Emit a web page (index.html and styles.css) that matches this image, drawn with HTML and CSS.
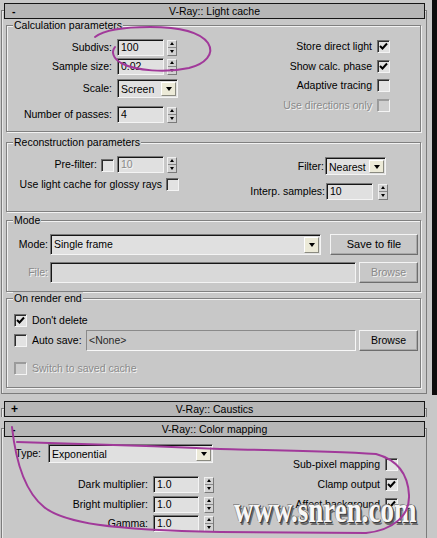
FILE: index.html
```html
<!DOCTYPE html>
<html lang="en">
<head>
<meta charset="utf-8">
<title>V-Ray:: Light cache</title>
<link rel="stylesheet" href="styles.css">
</head>
<body>
<div class="page">
  <div class="main">
    <section class="rollout lc">
      <div class="rhead"><span class="sign">-</span><span class="rtitle">V-Ray:: Light cache</span><span></span></div>

      <div class="group g-calc">
        <div class="gtitle">Calculation parameters</div>
        <div class="gcols">
          <div class="calc-left">
            <div class="row h17"><span class="lbl w105">Subdivs:</span><span class="field sunk f47">100</span><span class="spin"><i class="up"></i><i class="dn"></i></span></div>
            <div class="row h17 mt2"><span class="lbl w105">Sample size:</span><span class="field sunk f47">0.02</span><span class="spin"><i class="up"></i><i class="dn"></i></span></div>
            <div class="row h19 mt4"><span class="lbl w105">Scale:</span><span class="combo sunk c61"><span class="ctext">Screen</span><span class="cbtn"></span></span></div>
            <div class="row h17 mt8"><span class="lbl w105">Number of passes:</span><span class="field sunk f47">4</span><span class="spin"><i class="up"></i><i class="dn"></i></span></div>
          </div>
          <div class="checks calc-right">
            <div class="chk-row"><span>Store direct light</span><span class="cb"><svg viewBox="0 0 11 11"><polyline points="2,5 4.5,7.5 9,2.5"/></svg></span></div>
            <div class="chk-row"><span>Show calc. phase</span><span class="cb"><svg viewBox="0 0 11 11"><polyline points="2,5 4.5,7.5 9,2.5"/></svg></span></div>
            <div class="chk-row"><span>Adaptive tracing</span><span class="cb"></span></div>
            <div class="chk-row dis"><span>Use directions only</span><span class="cb off"></span></div>
          </div>
        </div>
      </div>

      <div class="group g-recon">
        <div class="gtitle">Reconstruction parameters</div>
        <div class="gcols">
          <div class="recon-left">
            <div class="row h17"><span class="lbl w90">Pre-filter:</span><span class="cb ml4"></span><span class="field sunk f47 ml3 distext">10</span><span class="spin"><i class="up"></i><i class="dn"></i></span></div>
            <div class="row h14 mt4"><span class="lbl w155">Use light cache for glossy rays</span><span class="cb ml4"></span></div>
          </div>
          <div class="recon-right">
            <div class="row h18"><span class="lbl w104">Filter:</span><span class="combo sunk c61 ml1"><span class="ctext">Nearest</span><span class="cbtn"></span></span></div>
            <div class="row h17 mt8"><span class="lbl w105">Interp. samples:</span><span class="field sunk f47 ml1">10</span><span class="spin ml5"><i class="up"></i><i class="dn"></i></span></div>
          </div>
        </div>
      </div>

      <div class="group g-mode">
        <div class="gtitle">Mode</div>
        <div class="mode-rows">
          <div class="row h21"><span class="lbl w41">Mode:</span><span class="combo sunk c271 ml2"><span class="ctext">Single frame</span><span class="cbtn"></span></span><span class="btn w88 ml9">Save to file</span></div>
          <div class="row h21 mt7"><span class="lbl w41 distext">File:</span><span class="field sunk wide306 ml2 tall"></span><span class="btn w59 ml3 distext">Browse</span></div>
        </div>
      </div>

      <div class="group g-ore">
        <div class="gtitle">On render end</div>
        <div class="ore-rows">
          <div class="row h14"><span class="cb"><svg viewBox="0 0 11 11"><polyline points="2,5 4.5,7.5 9,2.5"/></svg></span><span class="ctl">Don't delete</span></div>
          <div class="row h21 mt3"><span class="cb"></span><span class="ctl w54">Auto save:</span><span class="static w270">&lt;None&gt;</span><span class="btn w59 ml3">Browse</span></div>
          <div class="row h14 mt10 dis"><span class="cb off"></span><span class="ctl">Switch to saved cache</span></div>
        </div>
      </div>
    </section>

    <section class="rollout collapsed caus">
      <div class="rhead"><span class="sign plus">+</span><span class="rtitle">V-Ray:: Caustics</span><span></span></div>
    </section>

    <section class="rollout cm">
      <div class="rhead"><span class="sign">-</span><span class="rtitle">V-Ray:: Color mapping</span><span></span></div>
      <div class="cm-body">
        <div class="cm-left">
          <div class="row h19 mt7"><span class="lbl w39">Type:</span><span class="combo sunk c165 ml7"><span class="ctext">Exponential</span><span class="cbtn"></span></span></div>
          <div class="row h17 mt13"><span class="lbl w146">Dark multiplier:</span><span class="field sunk f46 ml5">1.0</span><span class="spin ml5"><i class="up"></i><i class="dn"></i></span></div>
          <div class="row h17 mt3"><span class="lbl w146">Bright multiplier:</span><span class="field sunk f46 ml5">1.0</span><span class="spin ml5"><i class="up"></i><i class="dn"></i></span></div>
          <div class="row h17 mt2"><span class="lbl w146">Gamma:</span><span class="field sunk f46 ml5">1.0</span><span class="spin ml5"><i class="up"></i><i class="dn"></i></span></div>
        </div>
        <div class="checks cm-right">
          <div class="chk-row"><span>Sub-pixel mapping</span><span class="cb"></span></div>
          <div class="chk-row"><span>Clamp output</span><span class="cb"><svg viewBox="0 0 11 11"><polyline points="2,5 4.5,7.5 9,2.5"/></svg></span></div>
          <div class="chk-row"><span>Affect background</span><span class="cb"><svg viewBox="0 0 11 11"><polyline points="2,5 4.5,7.5 9,2.5"/></svg></span></div>
        </div>
      </div>
    </section>
  </div>
  <div class="scrollbar"></div>
</div>

<div class="watermark">www.snren.com</div>

<svg class="marks" viewBox="0 0 437 538" width="437" height="538">
  <path d="M95 37 C104 30 124 27 150 27 C180 27 200 32 208 43 C215 54 205 64 189 68 C166 73 136 71 121 63 C113 58 111 52 115 47"/>
  <path d="M12 427 C15 455 23 490 44 507 C64 523 110 530 220 532 L366 533 C394 530 410 515 409 495 C408 475 398 460 376 454 C330 451 260 450 220 449 C150 446 60 443 17 442"/>
</svg>
</body>
</html>
```

FILE: styles.css
```css
* { box-sizing: border-box; }
html, body { margin: 0; padding: 0; }
body {
  width: 437px;
  height: 538px;
  overflow: hidden;
  position: relative;
  background: #c8c8c8;
  color: #000;
  font-family: "Liberation Sans", Arial, sans-serif;
  font-size: 10.5px;
  line-height: 13px;
}

.page { display: flex; width: 437px; height: 538px; overflow: hidden; }
.main { width: 432px; flex: none; }
.scrollbar { width: 5px; height: 395px; background: #0d0d0d; }

/* rollouts */
.rollout {
  width: 426px;
  margin-left: 1px;
  border: 1px solid #7c7c7c;
  box-shadow: inset 1px 1px 0 #e8e8e8;
}
.lc { margin-top: 10px; padding-bottom: 5px; }
.caus { margin-top: 14px; border-bottom: none; }
.cm { margin-top: 11px; height: 110px; border-bottom: none; }

.rhead {
  height: 16px;
  margin: -8px 1px 0 2px;
  border: 1px solid #151515;
  background: #b6b6b6;
  display: grid;
  grid-template-columns: 40px 1fr 40px;
  align-items: center;
  line-height: 14px;
}
.sign { padding-left: 7px; font-weight: bold; }
.sign.plus { padding-left: 6px; font-size: 12px; }
.rtitle { text-align: center; }

/* group boxes */
.group {
  width: 415px;
  margin-left: 4px;
  border: 1px solid #808080;
  box-shadow: inset 1px 1px 0 #f2f2f2, 1px 1px 0 #f2f2f2;
}
.gtitle {
  width: max-content;
  height: 13px;
  margin: -7px 0 0 6px;
  padding: 0 1px;
  background: #c8c8c8;
}
.g-calc { margin-top: 6px; height: 107px; }
.g-recon { margin-top: 10px; height: 70px; }
.g-mode { margin-top: 8px; height: 72px; }
.g-ore { margin-top: 6px; height: 90px; }

.gcols { display: flex; }

.row { display: flex; align-items: center; }
.h14 { height: 14px; }
.h17 { height: 17px; }
.h18 { height: 18px; }
.h19 { height: 19px; }
.h21 { height: 21px; }
.mt2 { margin-top: 2px; }
.mt3 { margin-top: 3px; }
.mt4 { margin-top: 4px; }
.mt7 { margin-top: 7px; }
.mt8 { margin-top: 8px; }
.mt10 { margin-top: 10px; }
.mt13 { margin-top: 13px; }
.ml1 { margin-left: 1px; }
.ml2 { margin-left: 2px; }
.ml3 { margin-left: 3px; }
.ml4 { margin-left: 4px; }
.ml5 { margin-left: 5px; }
.ml7 { margin-left: 7px; }
.ml9 { margin-left: 9px; }

.lbl { text-align: right; flex: none; white-space: nowrap; }
.w39 { width: 39px; }
.w41 { width: 41px; }
.w54 { width: 54px; }
.w88 { width: 88px; }
.w59 { width: 59px; }
.w90 { width: 90px; }
.w104 { width: 104px; }
.w105 { width: 105px; }
.w146 { width: 146px; }
.w155 { width: 155px; }
.w270 { width: 270px; }

/* sunken edit fields */
.sunk {
  border: 1px solid;
  border-color: #7a7a7a #f4f4f4 #f4f4f4 #7a7a7a;
  box-shadow: inset 1px 1px 0 #161616;
  background: #e0e0e0;
}
.field {
  flex: none;
  height: 17px;
  padding: 0 0 0 3px;
  line-height: 15px;
  white-space: nowrap;
}
.f47 { width: 47px; margin-left: 5px; }
.f46 { width: 46px; }
.recon-left .f47 { margin-left: 3px; }
.recon-right .f47 { margin-left: 1px; }
.wide306 { width: 306px; }
.field.tall { height: 21px; background: #d9d9d9; }

.spin {
  flex: none;
  width: 10px;
  height: 16px;
  margin-left: 3px;
  display: flex;
  flex-direction: column;
  border: 1px solid;
  border-color: #f0f0f0 #7a7a7a #7a7a7a #f0f0f0;
  background: #d2d2d2;
}
.spin.ml5 { margin-left: 5px; }
.spin i { flex: 1; display: flex; align-items: center; justify-content: center; }
.spin .up { border-bottom: 1px solid #8a8a8a; }
.spin i::before {
  content: "";
  border-left: 2px solid transparent;
  border-right: 2px solid transparent;
}
.spin .up::before { border-bottom: 3px solid #000; }
.spin .dn::before { border-top: 3px solid #000; }

/* combo boxes */
.combo {
  flex: none;
  display: flex;
  align-items: stretch;
  height: 100%;
  padding: 2px 1px 1px 3px;
}
.c61 { width: 61px; margin-left: 5px; }
.recon-right .c61 { margin-left: 1px; }
.c165 { width: 165px; }
.c271 { width: 271px; }
.ctext { flex: 1; line-height: 14px; white-space: nowrap; overflow: hidden; }
.cbtn {
  flex: none;
  width: 15px;
  border: 1px solid;
  border-color: #ffffff #8a8a80 #8a8a80 #ffffff;
  background: #ecead8;
  display: flex;
  align-items: center;
  justify-content: center;
}
.cbtn::before {
  content: "";
  border-left: 3.5px solid transparent;
  border-right: 3.5px solid transparent;
  border-top: 4px solid #000;
}

/* buttons */
.btn {
  flex: none;
  height: 100%;
  border: 1px solid;
  border-color: #f4f4f4 #6e6e6e #6e6e6e #f4f4f4;
  box-shadow: inset -1px -1px 0 #a8a8a8;
  background: #c8c8c8;
  display: flex;
  align-items: center;
  justify-content: center;
}
.btn.w88 { font-size: 11px; }

.static {
  flex: none;
  height: 100%;
  border: 1px solid;
  border-color: #8a8a8a #f8f8f8 #f8f8f8 #8a8a8a;
  padding-left: 2px;
  display: flex;
  align-items: center;
  color: #2a2a2a;
}

/* checkboxes */
.cb {
  flex: none;
  width: 13px;
  height: 13px;
  border: 1px solid;
  border-color: #6e6e6e #f4f4f4 #f4f4f4 #6e6e6e;
  box-shadow: inset 1px 1px 0 #2c2c2c;
  background: #e2e2e2;
  display: flex;
  align-items: center;
  justify-content: center;
}
.cb svg { width: 11px; height: 11px; display: block; }
.cb polyline { fill: none; stroke: #000; stroke-width: 2; }
.cb.off { background: #cfcfcf; box-shadow: inset 1px 1px 0 #9c9c9c; border-color: #9a9a9a #f4f4f4 #f4f4f4 #9a9a9a; }

.checks { flex: 1; display: flex; flex-direction: column; align-items: flex-end; }
.chk-row { display: flex; align-items: center; gap: 5px; height: 13px; white-space: nowrap; }

.dis, .distext { color: #8a8a8a; text-shadow: 1px 1px 0 #f4f4f4; }

/* calc group */
.calc-left { width: 212px; flex: none; padding-top: 7px; }
.calc-right { padding-top: 8px; padding-right: 30px; gap: 6.7px; }

/* recon group */
.recon-left { width: 213px; flex: none; padding-top: 7px; }
.recon-right { padding-top: 8px; }
.recon-left .cb { margin-top: 1px; }

/* mode group */
.mode-rows { padding-top: 7px; }

/* on render end */
.ore-rows { padding: 8px 0 0 7px; }
.ctl { margin-left: 5px; white-space: nowrap; }
.ctl.w54 { width: 54px; flex: none; }

/* color mapping */
.cm-body { display: flex; }
.cm-left { width: 214px; flex: none; }
.cm-right { padding-top: 21px; padding-right: 28px; gap: 7px; }

/* overlays */
.watermark {
  position: absolute;
  left: 234px;
  top: 492px;
  font-family: "Liberation Serif", "Times New Roman", serif;
  font-weight: bold;
  font-size: 27px;
  line-height: 27px;
  color: #f7f7f7;
  transform: scaleY(1.36);
  transform-origin: 0 0;
  white-space: nowrap;
  text-shadow: -1px -1px 0 #8c8c8c, 1px 1px 0 #3c3c3c, 2px 2px 0 #6a6a6a, 1px 0 0 #555;
  pointer-events: none;
}
.marks {
  position: absolute;
  left: 0;
  top: 0;
  pointer-events: none;
}
.marks path { fill: none; stroke: #a1399a; stroke-width: 2; stroke-linecap: round; }
```
